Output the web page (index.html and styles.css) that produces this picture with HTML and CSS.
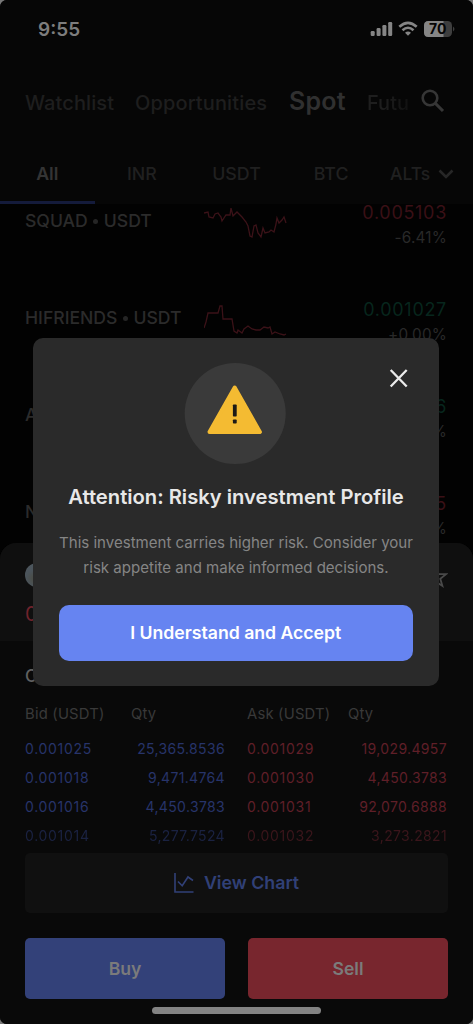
FILE: index.html
```html
<!DOCTYPE html>
<html lang="en">
<head>
<meta charset="utf-8">
<title>Spot markets</title>
<link rel="stylesheet" href="styles.css">
</head>
<body>
<div class="phone">
  <header class="top">
    <div class="status">
      <span class="time">9:55</span>
      <svg class="status-icons" width="86" height="18" viewBox="0 0 86 18">
        <g fill="#858585">
          <rect x="1.700" y="11" width="4" height="5" rx="1.200"/>
          <rect x="7.600" y="8" width="4" height="8" rx="1.200"/>
          <rect x="13.400" y="5" width="4" height="11" rx="1.200"/>
          <rect x="19.200" y="2" width="4" height="14" rx="1.200"/>
        </g>
        <g fill="none" stroke="#858585" stroke-width="2.600">
          <path d="M30.300 6.800 Q39 -1.200 47.700 6.800"/>
          <path d="M33.500 10.300 Q39 5.200 44.500 10.300"/>
        </g>
        <path d="M36 12.700 Q39 10.300 42 12.700 L39 15.800 Z" fill="#858585"/>
        <rect x="55" y="1" width="28" height="16" rx="4.500" fill="#3e3e3e"/>
        <path d="M59.500 1 H74.500 V17 H59.500 Q55 17 55 12.500 V5.500 Q55 1 59.500 1 Z" fill="#858585"/>
        <path d="M84 6.500 Q87 9 84 11.500 Z" fill="#3e3e3e"/>
        <text x="68.700" y="14" text-anchor="middle" class="battery">70</text>
      </svg>
    </div>
    <nav class="sections">
      <span class="sec watch">Watchlist</span>
      <span class="sec opp">Opportunities</span>
      <span class="sec spot">Spot</span>
      <span class="sec futu">Futu</span>
      <svg class="search" width="24" height="24" viewBox="0 0 24 24" fill="none" stroke="#363636" stroke-width="2.600"><circle cx="9" cy="9" r="7.300"/><path d="M14 14 L22 22" stroke-width="3.100"/></svg>
    </nav>
    <nav class="tabs">
      <span class="tab active">All</span>
      <span class="tab">INR</span>
      <span class="tab">USDT</span>
      <span class="tab">BTC</span>
      <span class="tab alts">ALTs <svg width="16" height="10" viewBox="0 0 16 10" fill="none" stroke="#262626" stroke-width="2.600"><path d="M1.500 1.500 L8 8 L14.500 1.500"/></svg></span>
    </nav>
  </header>

  <main class="list">
    <div class="row">
      <span class="pair">SQUAD <i></i> USDT</span>
      <svg class="spark" width="84" height="40" viewBox="0 0 84 40"><path d="M0 5 L4 4 L5 9 L9 10 L11 6 L14 5 L17 9 L18 13 L22 7 L26 7 L27 0 L29 8 L33 4 L38 9 L42 14 L44 18 L46 28 L48 29 L50 18 L52 17 L54 25 L57 29 L59 20 L61 25 L65 24 L67 22 L70 24 L72 16 L73 10 L75 15 L78 12 L80 9 L82 15"/></svg>
      <span class="quote"><b class="down">0.005103</b><em>-6.41%</em></span>
    </div>
    <div class="row">
      <span class="pair">HIFRIENDS <i></i> USDT</span>
      <svg class="spark" width="84" height="40" viewBox="0 0 84 40"><path d="M0 23 L2 17 L4 8 L14 8 L16 1 L18 1 L19 14 L28 14 L30 26 L33 28 L34 25 L38 28 L40 24 L44 21 L48 24 L52 25 L56 25 L60 22 L64 23 L66 22 L68 29 L71 27 L76 29 L80 30 L82 29"/></svg>
      <span class="quote"><b class="up">0.001027</b><em>+0.00%</em></span>
    </div>
    <div class="row">
      <span class="pair">A</span>
      <span class="quote"><b class="up">6</b><em>%</em></span>
    </div>
    <div class="row">
      <span class="pair">N</span>
      <span class="quote"><b class="down">5</b><em>%</em></span>
    </div>
  </main>

  <section class="sheet">
    <div class="coin-bar">
      <div class="coin-line">
        <span class="coin"></span>
        <svg width="24" height="24" viewBox="0 0 24 24" fill="none" stroke="#494949" stroke-width="1.800"><path d="M12 2.500 L14.600 9 L22 9.200 L16.300 13.800 L18.400 21 L12 16.800 L5.600 21 L7.700 13.800 L2 9.200 L9.400 9 Z"/></svg>
      </div>
      <span class="last">0</span>
    </div>
    <div class="book-title">O</div>
    <div class="book">
      <div class="side bids">
        <div class="line head"><span>Bid (USDT)</span><span>Qty</span></div>
        <div class="line"><span>0.001025</span><span class="qty">25,365.8536</span></div>
        <div class="line"><span>0.001018</span><span class="qty">9,471.4764</span></div>
        <div class="line"><span>0.001016</span><span class="qty">4,450.3783</span></div>
        <div class="line fade"><span>0.001014</span><span class="qty">5,277.7524</span></div>
      </div>
      <div class="side asks">
        <div class="line head"><span>Ask (USDT)</span><span>Qty</span></div>
        <div class="line"><span>0.001029</span><span class="qty">19,029.4957</span></div>
        <div class="line"><span>0.001030</span><span class="qty">4,450.3783</span></div>
        <div class="line"><span>0.001031</span><span class="qty">92,070.6888</span></div>
        <div class="line fade"><span>0.001032</span><span class="qty">3,273.2821</span></div>
      </div>
    </div>
    <div class="chart-button">
      <svg width="20" height="20" viewBox="0 0 20 20" fill="none" stroke="#314077" stroke-width="1.600"><path d="M1 0 V19 H19.500"/><path d="M4 8.500 L8.200 12.800 L14 4 L19 7.500"/></svg>
      <span>View Chart</span>
    </div>
    <div class="trade">
      <div class="buy">Buy</div>
      <div class="sell">Sell</div>
    </div>
    <div class="home"></div>
  </section>

  <section class="modal">
    <svg class="close" width="20" height="20" viewBox="0 0 20 20" fill="none" stroke="#ececec" stroke-width="2.300"><path d="M1.700 2 L17.700 18.500 M17.700 2 L1.700 18.500"/></svg>
    <div class="badge">
      <svg width="56" height="50" viewBox="0 0 56 50">
        <path d="M28 2.500 L53.200 47 H2.800 Z" fill="#f4bb32" stroke="#f4bb32" stroke-width="4" stroke-linejoin="round"/>
        <rect x="26.200" y="19.500" width="3.800" height="12" rx=".8" fill="#1c1a16"/><rect x="26.200" y="34.500" width="3.800" height="4" rx=".8" fill="#1c1a16"/>
      </svg>
    </div>
    <h1>Attention: Risky investment Profile</h1>
    <p>This investment carries higher risk. Consider your<br>risk appetite and make informed decisions.</p>
    <div class="accept">I Understand and Accept</div>
  </section>
</div>
</body>
</html>
```
FILE: styles.css
```css
* { box-sizing: border-box; }
body { margin: 0; background: #777; font-family: Inter, "Liberation Sans", sans-serif; }
svg { display: block; flex: none; }
.phone { position: relative; width: 473px; height: 1024px; overflow: hidden; border-radius: 7px; background: #020202; white-space: nowrap; }

.top { height: 204px; background: #060606; display: flex; flex-direction: column; }
.status { height: 58px; padding: 20px 18px 0 38px; display: flex; justify-content: space-between; }
.time { font-size: 19px; line-height: 19px; font-weight: 600; color: #7d7d7d; }
.battery { font-size: 14px; font-weight: 700; fill: #060606; }
.sections { height: 88px; padding: 2px 0 0 25px; display: flex; align-items: center; color: #1e1e1e; font-size: 20px; font-weight: 500; line-height: 24px; }
.sec { flex: none; }
.watch { width: 110px; letter-spacing: 0.1px; }
.opp { width: 154px; letter-spacing: 0.13px; }
.spot { width: 78px; font-size: 25px; font-weight: 600; letter-spacing: 0.2px; color: #303030; padding-bottom: 4px; }
.futu { width: 43px; margin-right: 11px; color: transparent; background: linear-gradient(90deg, #1e1e1e 40%, #101010); -webkit-background-clip: text; background-clip: text; }
.search { margin-top: -5px; }
.tabs { height: 58px; display: grid; grid-template-columns: repeat(5, 1fr); color: #202020; font-size: 17.8px; font-weight: 500; }
.tab { display: flex; align-items: center; justify-content: center; gap: 8px; border-bottom: 3px solid transparent; }
.tab.active { color: #343434; font-weight: 600; border-color: #141b3b; }
.tab.alts { padding-right: 7px; font-size: 17.5px; }

.list { height: 345px; overflow: hidden; padding: 0 26px 0 25px; }
.row { height: 97px; display: grid; grid-template-columns: 179px 84px 1fr; }
.row:first-child { margin-top: -33px; }
.pair { height: 97px; padding-top: 2px; display: flex; align-items: center; gap: 5.5px; font-size: 17.6px; font-weight: 500; color: #2b2b2b; }
.pair i { width: 5px; height: 5px; margin-top: 1px; border-radius: 50%; background: #252525; }
.spark { margin-top: 37px; fill: none; stroke: #3b1218; stroke-width: 1.300; }
.quote { grid-column: 3; display: flex; flex-direction: column; align-items: flex-end; padding-top: 30px; }
.quote b { font-size: 18px; line-height: 24px; font-weight: 400; letter-spacing: 0.7px; }
.quote em { font-size: 15.3px; line-height: 25px; font-style: normal; color: #292929; letter-spacing: 0.2px; }
.down { color: #3a1016; }
.up { color: #07261d; }

.sheet { position: absolute; left: 0; right: 0; bottom: 0; height: 481px; border-radius: 16px 16px 0 0; overflow: hidden; background: #090909; }
.coin-bar { height: 98px; background: #0f0f0f; padding: 20px 25px 0; }
.coin-line { height: 39px; display: flex; justify-content: space-between; }
.coin-line svg { margin-top: 2px; }
.coin { width: 24px; height: 24px; border-radius: 50%; background: radial-gradient(circle at 40% 65%, #4b4c43, #4b545b 40%, #4e5961); }
.last { display: block; font-size: 20px; line-height: 24px; color: #70232c; }
.book-title { height: 56px; padding: 23px 25px 0; font-size: 17px; line-height: 24px; font-weight: 500; color: #606060; }
.book { height: 156px; padding: 0 25px; display: grid; grid-template-columns: 200px 200px; gap: 22px; font-size: 14px; letter-spacing: 0.7px; }
.bids { color: #27346a; }
.asks { color: #5f1f28; }
.line { display: flex; justify-content: space-between; line-height: 29px; height: 29px; }
.qty { letter-spacing: 0.35px; }
.head { height: 37px; line-height: 35px; font-size: 14.8px; letter-spacing: 0.2px; justify-content: flex-start; color: #393939; }
.head span:first-child { width: 106px; }
.asks .head span:first-child { width: 101px; }
.fade { opacity: .58; }
.chart-button { height: 60px; margin: 0 25px 25px; border-radius: 5px; background: #101010; display: flex; align-items: center; justify-content: center; gap: 10px; color: #314077; font-size: 17.8px; font-weight: 600; }
.chart-button span { margin-top: -1px; }
.trade { height: 61px; padding: 0 25px; display: grid; grid-template-columns: 200px 200px; gap: 23px; font-size: 17.6px; font-weight: 600; line-height: 61px; text-align: center; color: #7b7b7b; }
.buy, .sell { border-radius: 5px; }
.buy { background: #334179; }
.sell { background: #78262e; }
.home { width: 169px; height: 7px; margin: 8px auto 0; border-radius: 4px; background: #838383; }

.modal { position: absolute; left: 33px; top: 338px; width: 406px; height: 348px; border-radius: 10px; background: #2a2a2a; padding: 25px 26px; text-align: center; }
.close { position: absolute; left: 356px; top: 30px; }
.badge { width: 101px; height: 101px; margin: 0 auto 0 126px; padding: 22px 1px 0 0; border-radius: 50%; background: #3a3a3a; display: flex; justify-content: center; transform: translateX(-0.3px); }
h1 { margin: 19px 0 0; color: #e8e8e8; font-size: 20.2px; line-height: 28px; font-weight: 600; }
p { margin: 19px -10px 0; color: #858585; font-size: 15.050px; line-height: 25px; }
.accept { height: 56px; width: 353.500px; margin-top: 25px; border-radius: 10px; background: #6684f1; color: #fff; font-size: 17.650px; line-height: 56px; font-weight: 600; }
```
